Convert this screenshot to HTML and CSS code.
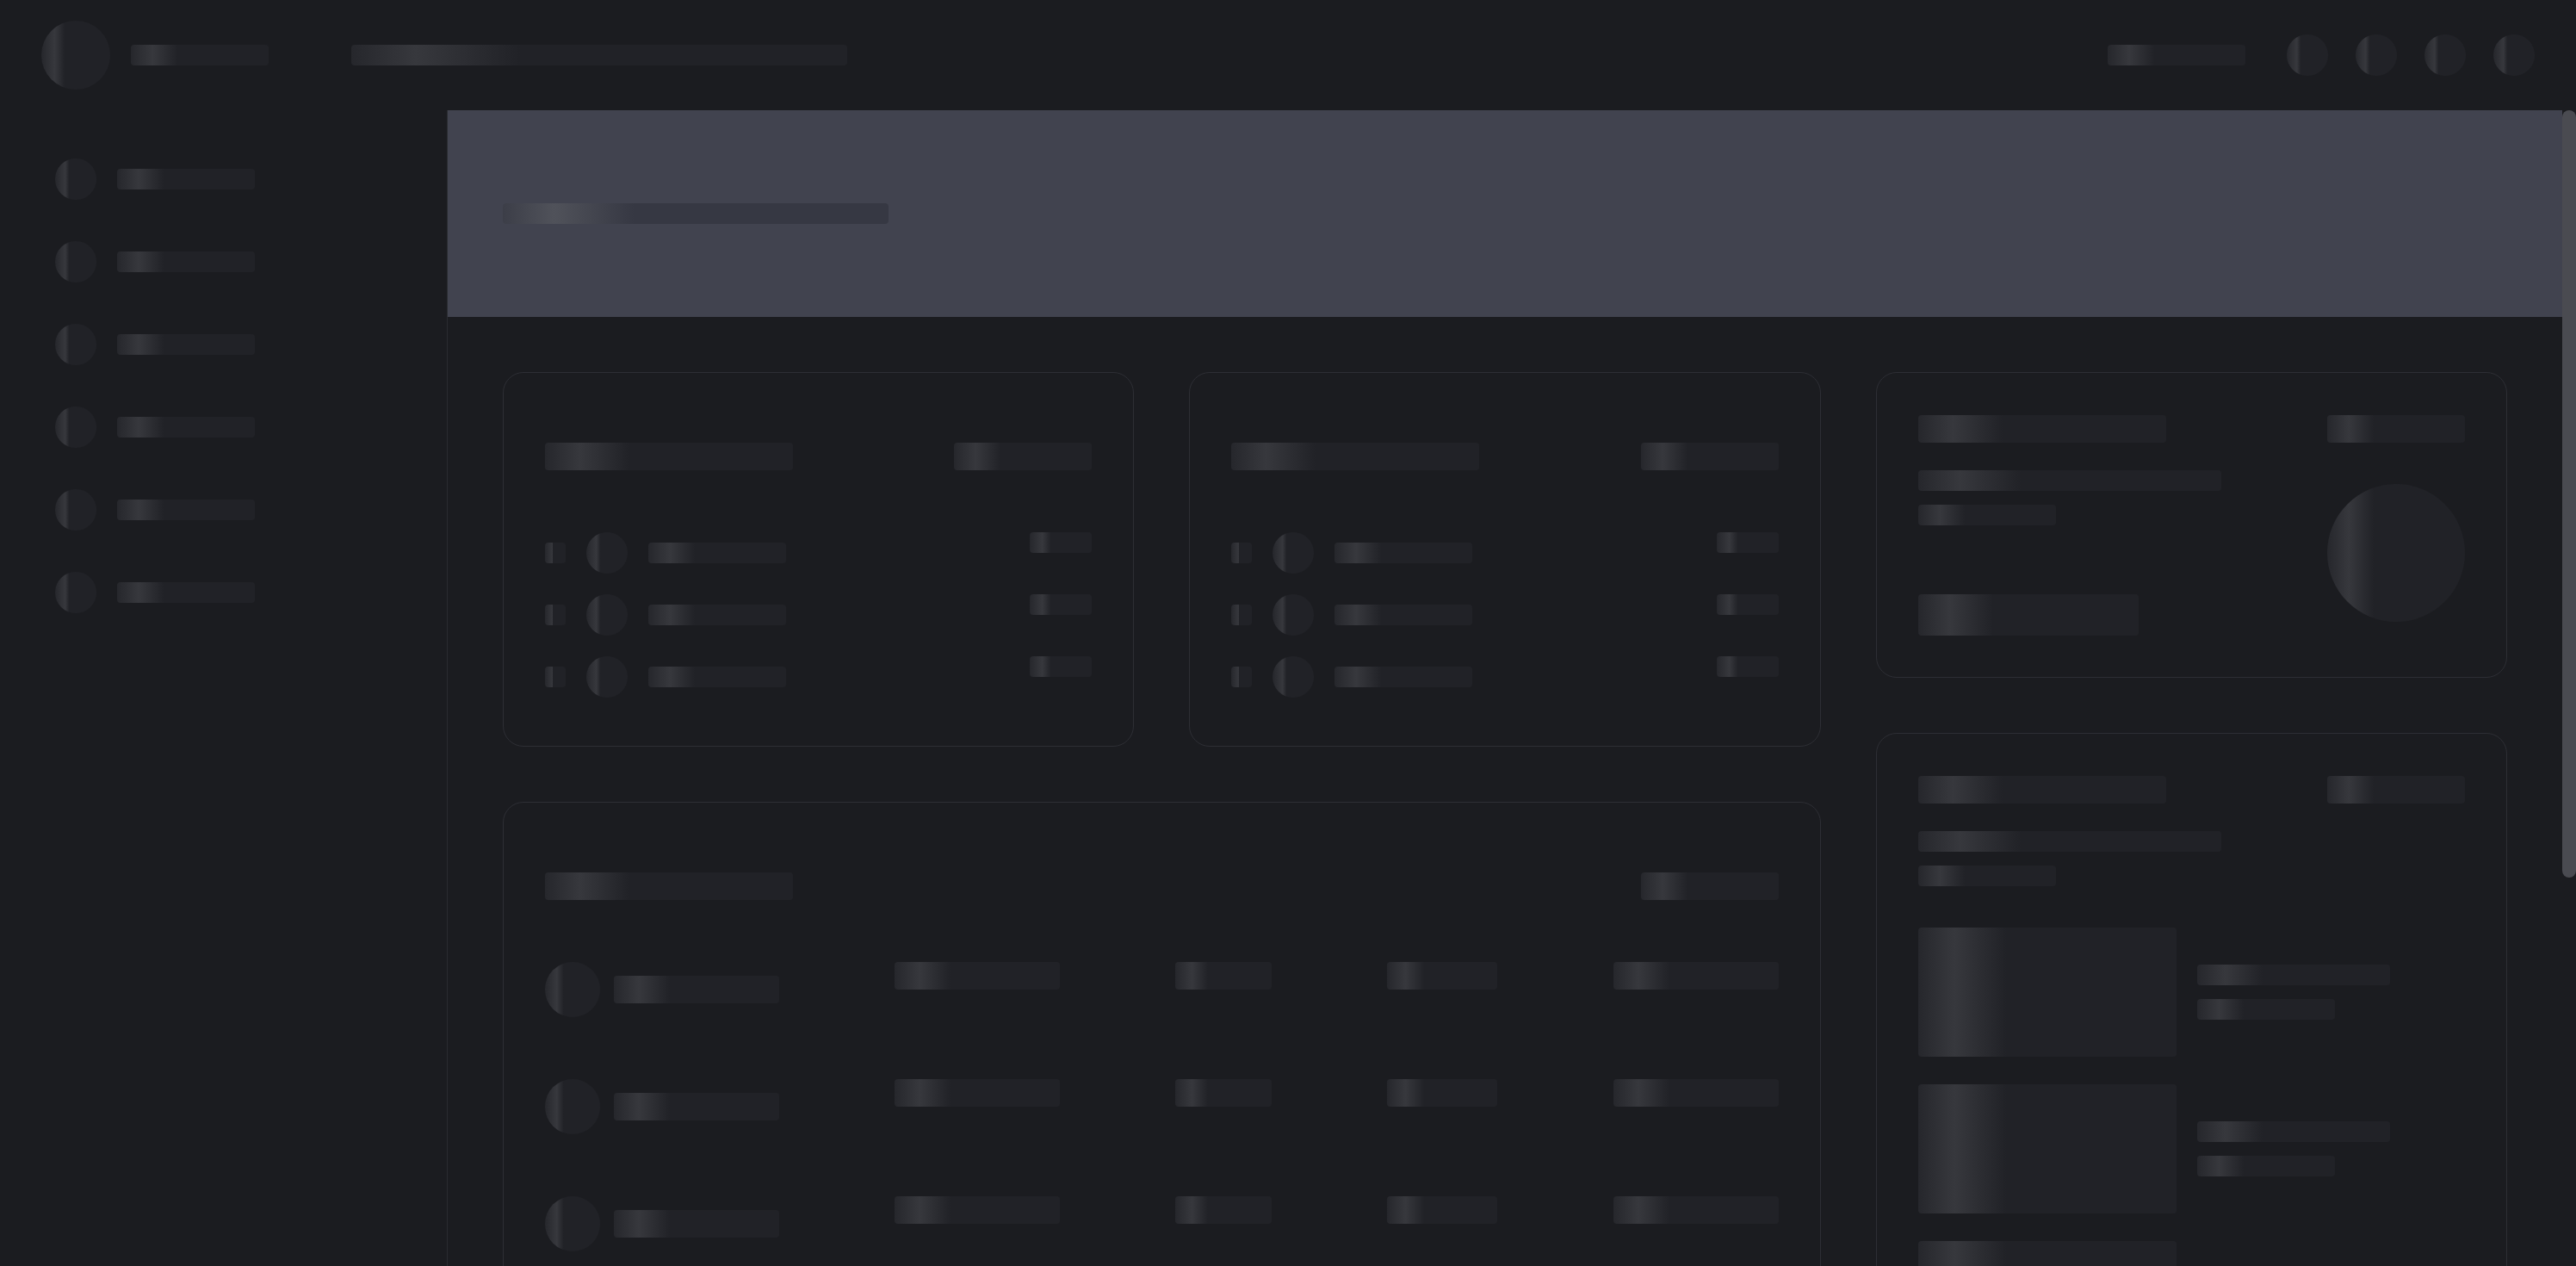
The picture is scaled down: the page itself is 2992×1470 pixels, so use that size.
FILE: index.html
```html
<!DOCTYPE html>
<html lang="en">
<head>
<meta charset="utf-8">
<title>Dashboard loading</title>
<link rel="stylesheet" href="styles.css">
</head>
<body>
<header class="topbar">
  <div class="topbar-left">
    <div class="sk circle c80"></div>
    <div class="sk bar w160 h24"></div>
    <div class="sk bar w576 h24 search"></div>
  </div>
  <div class="topbar-right">
    <div class="sk bar w160 h24"></div>
    <div class="icons">
      <div class="sk circle c48"></div>
      <div class="sk circle c48"></div>
      <div class="sk circle c48"></div>
      <div class="sk circle c48"></div>
    </div>
  </div>
</header>
<div class="layout">
  <nav class="sidebar">
    <div class="nav-item"><div class="sk circle c48"></div><div class="sk bar w160 h24"></div></div>
    <div class="nav-item"><div class="sk circle c48"></div><div class="sk bar w160 h24"></div></div>
    <div class="nav-item"><div class="sk circle c48"></div><div class="sk bar w160 h24"></div></div>
    <div class="nav-item"><div class="sk circle c48"></div><div class="sk bar w160 h24"></div></div>
    <div class="nav-item"><div class="sk circle c48"></div><div class="sk bar w160 h24"></div></div>
    <div class="nav-item"><div class="sk circle c48"></div><div class="sk bar w160 h24"></div></div>
  </nav>
  <div class="main-wrap">
  <main class="main">
    <section class="hero"><div class="hero-bar"></div></section>
    <div class="content">
      <div class="left-area">
        <div class="card list-card">
          <div class="card-head"><div class="sk bar w288 h32"></div><div class="sk bar w160 h32"></div></div>
          <div class="list">
            <div class="list-row"><div class="list-main"><div class="sk bar w24 h24"></div><div class="sk circle c48"></div><div class="sk bar w160 h24"></div></div><div class="sk bar w72 h24"></div></div>
            <div class="list-row"><div class="list-main"><div class="sk bar w24 h24"></div><div class="sk circle c48"></div><div class="sk bar w160 h24"></div></div><div class="sk bar w72 h24"></div></div>
            <div class="list-row"><div class="list-main"><div class="sk bar w24 h24"></div><div class="sk circle c48"></div><div class="sk bar w160 h24"></div></div><div class="sk bar w72 h24"></div></div>
          </div>
        </div>
        <div class="card list-card">
          <div class="card-head"><div class="sk bar w288 h32"></div><div class="sk bar w160 h32"></div></div>
          <div class="list">
            <div class="list-row"><div class="list-main"><div class="sk bar w24 h24"></div><div class="sk circle c48"></div><div class="sk bar w160 h24"></div></div><div class="sk bar w72 h24"></div></div>
            <div class="list-row"><div class="list-main"><div class="sk bar w24 h24"></div><div class="sk circle c48"></div><div class="sk bar w160 h24"></div></div><div class="sk bar w72 h24"></div></div>
            <div class="list-row"><div class="list-main"><div class="sk bar w24 h24"></div><div class="sk circle c48"></div><div class="sk bar w160 h24"></div></div><div class="sk bar w72 h24"></div></div>
          </div>
        </div>
        <div class="card table-card">
          <div class="card-head"><div class="sk bar w288 h32"></div><div class="sk bar w160 h32"></div></div>
          <div class="table">
            <div class="t-row"><div class="t-name"><div class="sk circle c64"></div><div class="sk bar w192 h32"></div></div><div class="sk bar w192 h32"></div><div class="sk bar w112 h32"></div><div class="sk bar w128 h32"></div><div class="sk bar w192 h32"></div></div>
            <div class="t-row"><div class="t-name"><div class="sk circle c64"></div><div class="sk bar w192 h32"></div></div><div class="sk bar w192 h32"></div><div class="sk bar w112 h32"></div><div class="sk bar w128 h32"></div><div class="sk bar w192 h32"></div></div>
            <div class="t-row"><div class="t-name"><div class="sk circle c64"></div><div class="sk bar w192 h32"></div></div><div class="sk bar w192 h32"></div><div class="sk bar w112 h32"></div><div class="sk bar w128 h32"></div><div class="sk bar w192 h32"></div></div>
            <div class="t-row"><div class="t-name"><div class="sk circle c64"></div><div class="sk bar w192 h32"></div></div><div class="sk bar w192 h32"></div><div class="sk bar w112 h32"></div><div class="sk bar w128 h32"></div><div class="sk bar w192 h32"></div></div>
            <div class="t-row"><div class="t-name"><div class="sk circle c64"></div><div class="sk bar w192 h32"></div></div><div class="sk bar w192 h32"></div><div class="sk bar w112 h32"></div><div class="sk bar w128 h32"></div><div class="sk bar w192 h32"></div></div>
            <div class="t-row"><div class="t-name"><div class="sk circle c64"></div><div class="sk bar w192 h32"></div></div><div class="sk bar w192 h32"></div><div class="sk bar w112 h32"></div><div class="sk bar w128 h32"></div><div class="sk bar w192 h32"></div></div>
            <div class="t-row"><div class="t-name"><div class="sk circle c64"></div><div class="sk bar w192 h32"></div></div><div class="sk bar w192 h32"></div><div class="sk bar w112 h32"></div><div class="sk bar w128 h32"></div><div class="sk bar w192 h32"></div></div>
          </div>
        </div>
      </div>
      <div class="right-area">
        <div class="card side-card">
          <div class="card-head"><div class="sk bar w288 h32"></div><div class="sk bar w160 h32"></div></div>
          <div class="stat-body">
            <div class="stat-text">
              <div class="stat-lines"><div class="sk bar w352 h24"></div><div class="sk bar w160 h24"></div></div>
              <div class="sk bar w256 h48"></div>
            </div>
            <div class="sk circle c160"></div>
          </div>
        </div>
        <div class="card side-card">
          <div class="card-head"><div class="sk bar w288 h32"></div><div class="sk bar w160 h32"></div></div>
          <div class="stat-lines feed-lines"><div class="sk bar w352 h24"></div><div class="sk bar w160 h24"></div></div>
          <div class="feed">
            <div class="feed-item"><div class="sk bar thumb"></div><div class="stat-lines"><div class="sk bar w224 h24"></div><div class="sk bar w160 h24"></div></div></div>
            <div class="feed-item"><div class="sk bar thumb"></div><div class="stat-lines"><div class="sk bar w224 h24"></div><div class="sk bar w160 h24"></div></div></div>
            <div class="feed-item"><div class="sk bar thumb"></div><div class="stat-lines"><div class="sk bar w224 h24"></div><div class="sk bar w160 h24"></div></div></div>
            <div class="feed-item"><div class="sk bar thumb"></div><div class="stat-lines"><div class="sk bar w224 h24"></div><div class="sk bar w160 h24"></div></div></div>
          </div>
        </div>
      </div>
    </div>
  </main>
  <div class="scrollbar"><div class="scroll-thumb"></div></div>
  </div>
</div>
</body>
</html>
```

FILE: styles.css
```css
* { box-sizing: border-box; }

html, body {
  margin: 0;
  height: 100%;
}

body {
  background: #1b1c20;
  font-family: "Inter", "Liberation Sans", sans-serif;
  color: #e4e4e7;
  overflow: hidden;
}

/* skeleton blocks */
.sk {
  flex: none;
  background: linear-gradient(90deg, #26272c 0%, #37383d calc(12% + 6px), #212227 34%, #212227 100%);
}
.bar { border-radius: 4px; }
.circle { border-radius: 50%; }

.c48 { width: 48px; height: 48px; }
.c64 { width: 64px; height: 64px; }
.c80 { width: 80px; height: 80px; }
.c160 { width: 160px; height: 160px; }

.w24 { width: 24px; }
.w72 { width: 72px; }
.w112 { width: 112px; }
.w128 { width: 128px; }
.w160 { width: 160px; }
.w192 { width: 192px; }
.w224 { width: 224px; }
.w256 { width: 256px; }
.w288 { width: 288px; }
.w352 { width: 352px; }
.w576 { width: 576px; }
.h24 { height: 24px; }
.h32 { height: 32px; }
.h48 { height: 48px; }

/* top bar */
.topbar {
  height: 128px;
  padding: 0 48px;
  display: flex;
  align-items: center;
  justify-content: space-between;
}
.topbar-left {
  display: flex;
  align-items: center;
  gap: 24px;
}
.topbar-left .search { margin-left: 72px; }
.topbar-right {
  display: flex;
  align-items: center;
  gap: 48px;
}
.icons {
  display: flex;
  gap: 32px;
}

/* layout */
.layout {
  display: flex;
  height: calc(100vh - 128px);
}
.sidebar {
  width: 520px;
  flex: none;
  border-right: 1px solid #2a2b30;
  padding: 56px 64px;
  display: flex;
  flex-direction: column;
  gap: 48px;
}
.nav-item {
  display: flex;
  align-items: center;
  gap: 24px;
}

.main-wrap {
  flex: 1;
  min-width: 0;
  display: flex;
}
.main {
  flex: 1;
  min-width: 0;
  overflow: hidden;
}
.scrollbar {
  width: 16px;
  flex: none;
  background: #1b1c20;
}
.scroll-thumb {
  height: 891px;
  background: #4a4b51;
  border-radius: 8px;
}

.hero {
  height: 240px;
  background: #41434f;
  padding: 0 64px;
  display: flex;
  align-items: center;
}
.hero-bar {
  width: 448px;
  height: 24px;
  border-radius: 4px;
  background: linear-gradient(90deg, #3c3e48 0%, #50525a calc(12% + 6px), #363843 34%, #363843 100%);
}

.content {
  display: grid;
  grid-template-columns: repeat(3, minmax(0, 1fr));
  gap: 64px;
  padding: 64px 64px 96px;
  align-items: start;
}
.left-area {
  grid-column: span 2;
  display: grid;
  grid-template-columns: repeat(2, minmax(0, 1fr));
  gap: 64px;
  align-items: start;
}
.right-area {
  display: flex;
  flex-direction: column;
  gap: 64px;
}

.card {
  border: 1px solid #2d2e34;
  border-radius: 24px;
  padding: 49px 48px 48px;
}
.card-head {
  display: flex;
  justify-content: space-between;
  align-items: center;
}

/* list cards */
.list-card { padding: 81px 48px 56px; }
.list {
  margin-top: 72px;
  display: flex;
  flex-direction: column;
  gap: 24px;
}
.list-row {
  display: flex;
  justify-content: space-between;
  align-items: flex-start;
}
.list-main {
  display: flex;
  align-items: center;
  gap: 24px;
}

/* table card */
.table-card {
  grid-column: span 2;
  padding: 81px 48px 56px;
}
.table {
  margin-top: 72px;
  display: flex;
  flex-direction: column;
  gap: 72px;
}
.t-row {
  display: flex;
  justify-content: space-between;
  align-items: flex-start;
}
.t-name {
  display: flex;
  align-items: center;
  gap: 16px;
}

/* stat card */
.stat-body {
  margin-top: 32px;
  display: flex;
  justify-content: space-between;
  align-items: center;
}
.stat-text {
  height: 192px;
  display: flex;
  flex-direction: column;
  justify-content: space-between;
}
.stat-lines {
  display: flex;
  flex-direction: column;
  gap: 16px;
}

/* feed card */
.feed-lines { margin-top: 32px; }
.feed {
  margin-top: 48px;
  display: flex;
  flex-direction: column;
  gap: 32px;
}
.feed-item {
  display: flex;
  align-items: center;
  gap: 24px;
}
.thumb {
  width: 300px;
  height: 150px;
  border-radius: 4px;
}
```
